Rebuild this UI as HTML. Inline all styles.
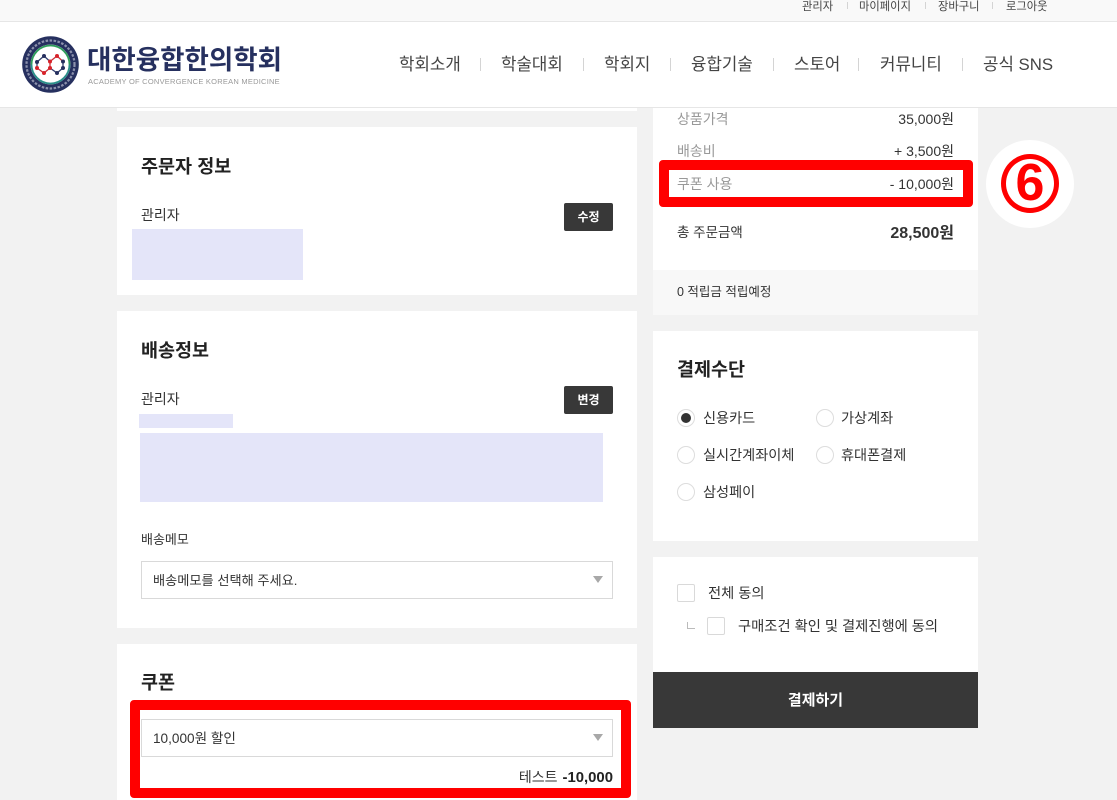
<!DOCTYPE html>
<html lang="ko"><head><meta charset="utf-8"><title>주문</title>
<style>
html,body{margin:0;padding:0}
body{width:1117px;height:800px;overflow:hidden;background:#f2f2f2;position:relative;font-family:"Liberation Sans","Noto Sans CJK KR",sans-serif;color:#333;font-size:14.2px}
.b{position:absolute;background:#fff}
.t{position:absolute;white-space:nowrap;line-height:20px}
.r{text-align:right}
.h{font-size:18.5px;font-weight:700;color:#222;line-height:26px}
.g{color:#999}
.nav{font-size:16.8px;color:#444;line-height:24px;top:53px}
.s{position:absolute;width:1px;background:#d4d4d4}
.top{font-size:11.3px;color:#444;top:-3px}
.btn{position:absolute;background:#383838;border-radius:2px;color:#fff;font-size:12px;font-weight:700;text-align:center;width:49px;height:28px;line-height:28px}
.p{position:absolute;background:#e4e5f9}
.sel{position:absolute;background:#fff;border:1px solid #d9d9d9;box-sizing:border-box;width:472px;height:38px}
.arr{position:absolute;width:0;height:0;border-left:5px solid transparent;border-right:5px solid transparent;border-top:7px solid #a8a8a8}
.rad{position:absolute;width:16px;height:16px;border:1px solid #ddd;border-radius:50%;background:#fff}
.chk{position:absolute;width:16px;height:16px;border:1px solid #d9d9d9;border-radius:2px;background:#fff}
.red{position:absolute;border:10px solid #f00;border-radius:4px;box-sizing:border-box}
</style></head><body>

<div class="b" style="left:0;top:0;width:1117px;height:21px;background:#f9f9f9"></div>
<div class="b" style="left:0;top:21px;width:1117px;height:1px;background:#e6e6e6"></div>
<div class="t top" style="left:802px">관리자</div>
<div class="s" style="left:847px;top:2px;height:7px"></div>
<div class="t top" style="left:859px">마이페이지</div>
<div class="s" style="left:925px;top:2px;height:7px"></div>
<div class="t top" style="left:938px">장바구니</div>
<div class="s" style="left:992px;top:2px;height:7px"></div>
<div class="t top" style="left:1006px">로그아웃</div>

<div class="b" style="left:0;top:22px;width:1117px;height:85px"></div>
<div class="b" style="left:0;top:107px;width:1117px;height:1px;background:#e6e6e6"></div>

<svg style="position:absolute;left:22px;top:36px" width="57" height="57" viewBox="0 0 57 57">
<circle cx="28.500" cy="28.500" r="28.300" fill="#26305f"/>
<circle cx="28.500" cy="28.500" r="24" fill="none" stroke="#8c91ac" stroke-width="2.200" stroke-dasharray="2.500 1.500"/>
<circle cx="28.500" cy="28.500" r="20" fill="#fff"/>
<circle cx="28.500" cy="28.500" r="19" fill="none" stroke="#d9c34a" stroke-width="1.200"/>
<path d="M9.500 28.500A19 19 0 0 1 47.500 28.500" fill="none" stroke="#2f9e5b" stroke-width="1.800"/>
<path d="M47.500 28.500A19 19 0 0 1 9.500 28.500" fill="none" stroke="#2a8f8a" stroke-width="1.800"/>
<g fill="none" stroke-width="1.300">
<path d="M15 26L22 20L28 25.500" stroke="#33406f"/>
<path d="M28 25.500L35 20L41 25.500" stroke="#c9303a"/>
<path d="M41 25.500L41 32L35 37L28 32" stroke="#33406f"/>
<path d="M28 25.500L28 32L22 37L15 32" stroke="#c9303a"/>
<path d="M15 26L15 32" stroke="#33406f"/>
</g>
<g fill="#26305f"><circle cx="22" cy="20" r="2"/><circle cx="15" cy="26" r="2"/><circle cx="41" cy="25.500" r="2"/><circle cx="41" cy="32" r="2"/><circle cx="35" cy="37" r="2"/></g>
<g fill="#d8232a"><circle cx="28" cy="25.500" r="2"/><circle cx="35" cy="20" r="2"/><circle cx="15" cy="32" r="2"/><circle cx="22" cy="37" r="2"/><circle cx="28" cy="32" r="2"/></g>
</svg>
<div class="t" style="left:87px;top:44px;font-size:26.500px;font-weight:700;color:#26305f;line-height:32px">대한융합한의학회</div>
<div class="t" style="left:88px;top:76px;font-size:7.500px;color:#999;line-height:12px;letter-spacing:.24px">ACADEMY OF CONVERGENCE KOREAN MEDICINE</div>

<div class="t nav" style="left:399px">학회소개</div>
<div class="s" style="left:480px;top:58px;height:13px"></div>
<div class="t nav" style="left:501px">학술대회</div>
<div class="s" style="left:583px;top:58px;height:13px"></div>
<div class="t nav" style="left:604px">학회지</div>
<div class="s" style="left:670px;top:58px;height:13px"></div>
<div class="t nav" style="left:691px">융합기술</div>
<div class="s" style="left:773px;top:58px;height:13px"></div>
<div class="t nav" style="left:794px">스토어</div>
<div class="s" style="left:858px;top:58px;height:13px"></div>
<div class="t nav" style="left:880px">커뮤니티</div>
<div class="s" style="left:962px;top:58px;height:13px"></div>
<div class="t nav" style="left:983px">공식 SNS</div>

<!-- left column -->
<div class="b" style="left:117px;top:108px;width:520px;height:3px"></div>
<div class="b" style="left:117px;top:127px;width:520px;height:168px"></div>
<div class="b" style="left:117px;top:311px;width:520px;height:317px"></div>
<div class="b" style="left:117px;top:644px;width:520px;height:156px"></div>

<div class="t h" style="left:141px;top:154px">주문자 정보</div>
<div class="t" style="left:141px;top:205px;font-size:14px">관리자</div>
<div class="btn" style="left:564px;top:203px">수정</div>
<div class="p" style="left:132px;top:229px;width:171px;height:51px"></div>

<div class="t h" style="left:141px;top:338px">배송정보</div>
<div class="t" style="left:141px;top:389px;font-size:14px">관리자</div>
<div class="btn" style="left:564px;top:386px">변경</div>
<div class="p" style="left:139px;top:414px;width:94px;height:14px"></div>
<div class="p" style="left:140px;top:433px;width:463px;height:69px"></div>
<div class="t" style="left:141px;top:530px;font-size:13px">배송메모</div>
<div class="sel" style="left:141px;top:561px"></div>
<div class="t" style="left:153px;top:571px;font-size:13.200px">배송메모를 선택해 주세요.</div>
<div class="arr" style="left:593px;top:576px"></div>

<div class="t h" style="left:141px;top:670px">쿠폰</div>
<div class="red" style="left:130px;top:700px;width:501px;height:98px"></div>
<div class="sel" style="left:141px;top:719px"></div>
<div class="t" style="left:153px;top:729px;font-size:13.600px">10,000원 할인</div>
<div class="arr" style="left:593px;top:734px"></div>
<div class="t r" style="right:504px;top:767px"><span style="font-size:14px;margin-right:1px">테스트</span> <b style="color:#222;font-size:14.900px">-10,000</b></div>

<!-- right column -->
<div class="b" style="left:653px;top:108px;width:325px;height:162px"></div>
<div class="b" style="left:653px;top:270px;width:325px;height:45px;background:#f8f8f8"></div>
<div class="b" style="left:653px;top:331px;width:325px;height:210px"></div>
<div class="b" style="left:653px;top:557px;width:325px;height:115px"></div>
<div class="b" style="left:653px;top:672px;width:325px;height:56px;background:#383838"></div>

<div class="t g" style="left:677px;top:109px;font-size:14px">상품가격</div>
<div class="t r" style="right:163px;top:109px;font-size:14px">35,000원</div>
<div class="t g" style="left:677px;top:141px;font-size:14px">배송비</div>
<div class="t r" style="right:163px;top:141px;font-size:14px">+ 3,500원</div>
<div class="red" style="left:659px;top:160px;width:314px;height:47px"></div>
<div class="t g" style="left:677px;top:174px;font-size:14px">쿠폰 사용</div>
<div class="t r" style="right:163px;top:174px;font-size:14px">- 10,000원</div>
<div class="t" style="left:677px;top:223px;font-size:13.500px">총 주문금액</div>
<div class="t r" style="right:163px;top:224px;font-size:16px;font-weight:700">28,500원</div>
<div class="t" style="left:677px;top:282px;font-size:12.500px">0 적립금 적립예정</div>

<div class="t h" style="left:677px;top:357px">결제수단</div>
<div class="rad" style="left:677px;top:409px"></div>
<div style="position:absolute;left:681px;top:413px;width:10px;height:10px;border-radius:50%;background:#333"></div>
<div class="t" style="left:703px;top:409px">신용카드</div>
<div class="rad" style="left:816px;top:409px"></div>
<div class="t" style="left:841px;top:409px">가상계좌</div>
<div class="rad" style="left:677px;top:446px"></div>
<div class="t" style="left:703px;top:446px">실시간계좌이체</div>
<div class="rad" style="left:816px;top:446px"></div>
<div class="t" style="left:841px;top:446px">휴대폰결제</div>
<div class="rad" style="left:677px;top:483px"></div>
<div class="t" style="left:703px;top:483px">삼성페이</div>

<div class="chk" style="left:677px;top:584px"></div>
<div class="t" style="left:708px;top:584px;font-size:14.300px">전체 동의</div>
<div style="position:absolute;left:687px;top:622px;width:7px;height:6px;border-left:1px solid #bbb;border-bottom:1px solid #bbb"></div>
<div class="chk" style="left:707px;top:617px"></div>
<div class="t" style="left:738px;top:617px;font-size:14.300px">구매조건 확인 및 결제진행에 동의</div>
<div class="t" style="left:653px;width:325px;top:691px;text-align:center;color:#fff;font-weight:700;font-size:15px">결제하기</div>

<!-- annotation -->
<div style="position:absolute;left:986px;top:140px;width:88px;height:88px;border-radius:50%;background:#fff"></div>
<div style="position:absolute;left:1001px;top:154px;width:58px;height:59px;box-sizing:border-box;border:5px solid #f00;border-radius:50%"></div>
<div class="t" style="left:1001px;width:58px;top:154px;height:59px;line-height:59px;text-align:center;font-size:52px;font-weight:700;color:#f00">6</div>

</body></html>
